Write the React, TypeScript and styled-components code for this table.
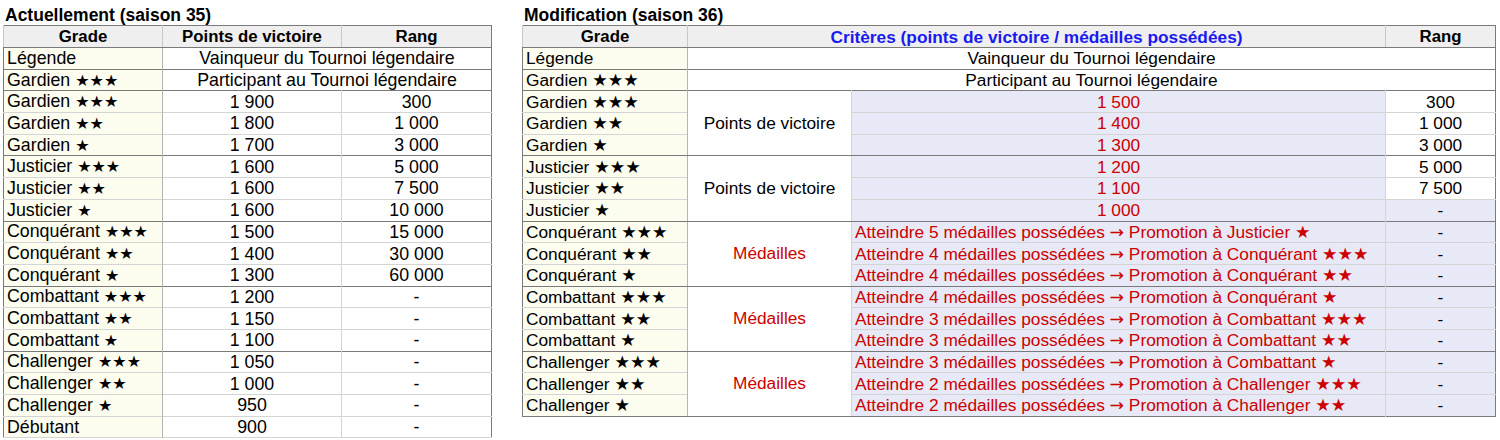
import styled, { createGlobalStyle } from 'styled-components';

const GlobalStyle = createGlobalStyle`
  body {
    margin: 0;
    background: #ffffff;
    font-family: 'Liberation Sans', Arial, sans-serif;
    color: #000;
  }
`;

const Page = styled.div`
  display: flex;
  align-items: flex-start;
  gap: 30px;
  padding: 5px 0 0 3px;
`;

const Section = styled.section`
  display: flex;
  flex-direction: column;
`;

const Title = styled.h2`
  margin: 0;
  padding-left: 2px;
  font-size: 17.5px;
  line-height: 20px;
  font-weight: bold;
`;

const Table = styled.table<{ $width: number; $size: number }>`
  width: ${(p) => p.$width}px;
  border-collapse: collapse;
  table-layout: fixed;
  border: 1px solid #7a7a7a;
  font-size: ${(p) => p.$size}px;
`;

const HeadRow = styled.tr`
  height: 22px;
`;

const Row = styled.tr<{ $end?: boolean }>`
  height: 21.7px;
  border-bottom: 1px solid ${(p) => (p.$end ? '#7a7a7a' : '#d4d4d4')};
`;

const Head = styled.th<{ $blue?: boolean }>`
  background: #efefef;
  font-weight: bold;
  font-size: ${(p) => (p.$blue ? '17.3px' : '16.8px')};
  padding: 0 3px;
  line-height: 18px;
  border-left: 1px solid #c8c8c8;
  border-bottom: 1px solid #7a7a7a;
  white-space: nowrap;
  color: ${(p) => (p.$blue ? '#1a1af0' : '#000')};
`;

const Grade = styled.td`
  background: #fcfcef;
  padding: 0 3px;
  line-height: 18px;
  white-space: nowrap;
  border-right: 1px solid #b4b4b4;
`;

const Stars = styled.span<{ $small?: boolean }>`
  font-family: 'DejaVu Sans', sans-serif;
  font-size: ${(p) => (p.$small ? '0.9em' : '1em')};
`;

const Arrow = styled.span`
  font-family: 'DejaVu Sans', sans-serif;
`;

const Cell = styled.td<{ $left?: boolean; $red?: boolean; $tint?: boolean }>`
  padding: 0 3px;
  line-height: 18px;
  white-space: nowrap;
  text-align: ${(p) => (p.$left ? 'left' : 'center')};
  color: ${(p) => (p.$red ? '#cc0000' : '#000')};
  background: ${(p) => (p.$tint ? '#e7eaf6' : '#ffffff')};
  border-left: 1px solid #d4d4d4;
`;

const Label = styled.td<{ $red?: boolean }>`
  text-align: center;
  vertical-align: middle;
  white-space: nowrap;
  background: #ffffff;
  color: ${(p) => (p.$red ? '#cc0000' : '#000')};
  border-left: 1px solid #b4b4b4;
  border-bottom: 1px solid #7a7a7a;
`;

// split "Gardien ★★★" into name and stars so the stars can take their own glyph size
function GradeName({ text, small }: { text: string; small?: boolean }) {
  const i = text.indexOf('★');
  if (i < 0) return <>{text}</>;
  return (
    <>
      {text.slice(0, i)}
      <Stars $small={small}>{text.slice(i)}</Stars>
    </>
  );
}

function Rule({ text }: { text: string }) {
  const [before, after] = text.split('→');
  return (
    <>
      {before}
      <Arrow>→</Arrow>
      <GradeName text={after} />
    </>
  );
}

const current: [string, string, string, boolean][] = [
  ['Gardien ★★★', '1 900', '300', false],
  ['Gardien ★★', '1 800', '1 000', false],
  ['Gardien ★', '1 700', '3 000', true],
  ['Justicier ★★★', '1 600', '5 000', false],
  ['Justicier ★★', '1 600', '7 500', false],
  ['Justicier ★', '1 600', '10 000', true],
  ['Conquérant ★★★', '1 500', '15 000', false],
  ['Conquérant ★★', '1 400', '30 000', false],
  ['Conquérant ★', '1 300', '60 000', true],
  ['Combattant ★★★', '1 200', '-', false],
  ['Combattant ★★', '1 150', '-', false],
  ['Combattant ★', '1 100', '-', true],
  ['Challenger ★★★', '1 050', '-', false],
  ['Challenger ★★', '1 000', '-', false],
  ['Challenger ★', '950', '-', false],
  ['Débutant', '900', '-', false],
];

type Group = {
  label: string;
  medals: boolean;
  rows: [string, string, string][];
};

const next: Group[] = [
  {
    label: 'Points de victoire',
    medals: false,
    rows: [
      ['Gardien ★★★', '1 500', '300'],
      ['Gardien ★★', '1 400', '1 000'],
      ['Gardien ★', '1 300', '3 000'],
    ],
  },
  {
    label: 'Points de victoire',
    medals: false,
    rows: [
      ['Justicier ★★★', '1 200', '5 000'],
      ['Justicier ★★', '1 100', '7 500'],
      ['Justicier ★', '1 000', '-'],
    ],
  },
  {
    label: 'Médailles',
    medals: true,
    rows: [
      ['Conquérant ★★★', 'Atteindre 5 médailles possédées → Promotion à Justicier ★', '-'],
      ['Conquérant ★★', 'Atteindre 4 médailles possédées → Promotion à Conquérant ★★★', '-'],
      ['Conquérant ★', 'Atteindre 4 médailles possédées → Promotion à Conquérant ★★', '-'],
    ],
  },
  {
    label: 'Médailles',
    medals: true,
    rows: [
      ['Combattant ★★★', 'Atteindre 4 médailles possédées → Promotion à Conquérant ★', '-'],
      ['Combattant ★★', 'Atteindre 3 médailles possédées → Promotion à Combattant ★★★', '-'],
      ['Combattant ★', 'Atteindre 3 médailles possédées → Promotion à Combattant ★★', '-'],
    ],
  },
  {
    label: 'Médailles',
    medals: true,
    rows: [
      ['Challenger ★★★', 'Atteindre 3 médailles possédées → Promotion à Combattant ★', '-'],
      ['Challenger ★★', 'Atteindre 2 médailles possédées → Promotion à Challenger ★★★', '-'],
      ['Challenger ★', 'Atteindre 2 médailles possédées → Promotion à Challenger ★★', '-'],
    ],
  },
];

function CurrentTable() {
  return (
    <Section>
      <Title>Actuellement (saison 35)</Title>
      <Table $width={488} $size={17.8}>
        <colgroup>
          <col style={{ width: 159 }} />
          <col style={{ width: 179 }} />
          <col style={{ width: 150 }} />
        </colgroup>
        <thead>
          <HeadRow>
            <Head>Grade</Head>
            <Head>Points de victoire</Head>
            <Head>Rang</Head>
          </HeadRow>
        </thead>
        <tbody>
          <Row $end>
            <Grade>Légende</Grade>
            <Cell colSpan={2}>Vainqueur du Tournoi légendaire</Cell>
          </Row>
          <Row $end>
            <Grade>
              <GradeName text="Gardien ★★★" small />
            </Grade>
            <Cell colSpan={2}>Participant au Tournoi légendaire</Cell>
          </Row>
          {current.map(([grade, points, rank, end]) => (
            <Row key={grade} $end={end}>
              <Grade>
                <GradeName text={grade} small />
              </Grade>
              <Cell>{points}</Cell>
              <Cell>{rank}</Cell>
            </Row>
          ))}
        </tbody>
      </Table>
    </Section>
  );
}

function NextTable() {
  return (
    <Section>
      <Title>Modification (saison 36)</Title>
      <Table $width={973} $size={17.3}>
        <colgroup>
          <col style={{ width: 165 }} />
          <col style={{ width: 164 }} />
          <col style={{ width: 534 }} />
          <col style={{ width: 110 }} />
        </colgroup>
        <thead>
          <HeadRow>
            <Head>Grade</Head>
            <Head colSpan={2} $blue>
              Critères (points de victoire / médailles possédées)
            </Head>
            <Head>Rang</Head>
          </HeadRow>
        </thead>
        <tbody>
          <Row $end>
            <Grade>Légende</Grade>
            <Cell colSpan={3}>Vainqueur du Tournoi légendaire</Cell>
          </Row>
          <Row $end>
            <Grade>
              <GradeName text="Gardien ★★★" />
            </Grade>
            <Cell colSpan={3}>Participant au Tournoi légendaire</Cell>
          </Row>
          {next.map((group) =>
            group.rows.map(([grade, rule, rank], i) => (
              <Row key={grade} $end={i === group.rows.length - 1}>
                <Grade>
                  <GradeName text={grade} />
                </Grade>
                {i === 0 && (
                  <Label rowSpan={3} $red={group.medals}>
                    {group.label}
                  </Label>
                )}
                <Cell $red $tint $left={group.medals}>
                  {group.medals ? <Rule text={rule} /> : rule}
                </Cell>
                <Cell $tint={rank === '-'}>{rank}</Cell>
              </Row>
            ))
          )}
        </tbody>
      </Table>
    </Section>
  );
}

export default function App() {
  return (
    <>
      <GlobalStyle />
      <Page>
        <CurrentTable />
        <NextTable />
      </Page>
    </>
  );
}
